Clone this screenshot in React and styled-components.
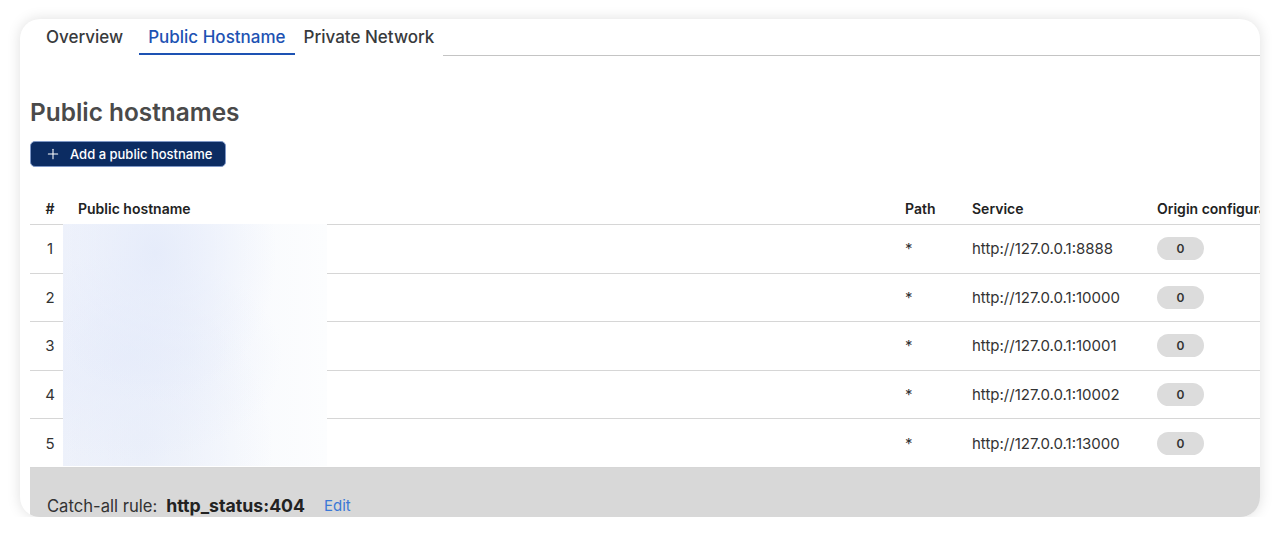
import React from 'react'
import { styled, createGlobalStyle } from 'styled-components'
import { Plus } from 'lucide-react'

const rows = [
  { id: 1, service: 'http://127.0.0.1:8888' },
  { id: 2, service: 'http://127.0.0.1:10000' },
  { id: 3, service: 'http://127.0.0.1:10001' },
  { id: 4, service: 'http://127.0.0.1:10002' },
  { id: 5, service: 'http://127.0.0.1:13000' },
]

function App() {
  return (
    <>
      <Global />
      <Card>
        <Tabs>
          <Tab>Overview</Tab>
          <Tab active>Public Hostname</Tab>
          <Tab>Private Network</Tab>
          <TabFill />
        </Tabs>

        <Heading>Public hostnames</Heading>
        <AddButton>
          <Plus size={16} strokeWidth={1.6} />
          Add a public hostname
        </AddButton>

        <Table>
          <HeadRow>
            <Cell center>#</Cell>
            <Cell>Public hostname</Cell>
            <Cell>Path</Cell>
            <Cell>Service</Cell>
            <Cell>Origin configurations</Cell>
          </HeadRow>
          {rows.map(r => (
            <Row key={r.id}>
              <Cell center>{r.id}</Cell>
              <Cell />
              <Cell>*</Cell>
              <Cell>{r.service}</Cell>
              <Cell>
                <Badge>0</Badge>
              </Cell>
            </Row>
          ))}
          <Redacted />
        </Table>

        <Footer>
          Catch-all rule:
          <Rule>http_status:404</Rule>
          <EditLink>Edit</EditLink>
        </Footer>
      </Card>
    </>
  )
}

export default App

const Global = createGlobalStyle`
  html, body {
    margin: 0;
    background: #ffffff;
    font-family: Inter, "Noto Sans", "Liberation Sans", sans-serif;
    color: #333;
  }
`

const Card = styled.div`
  margin: 19px 0 0 20px;
  width: 1240px;
  height: 498px;
  box-sizing: border-box;
  padding-left: 10px;
  background: #fff;
  border-radius: 20px;
  overflow: hidden;
  box-shadow: 0 0 14px rgba(0, 0, 0, 0.13);
`

const Tabs = styled.div`
  display: flex;
  height: 37px;
  padding-left: 7px;
`

const Tab = styled.div`
  display: flex;
  align-items: center;
  padding: 1px 9px 0;
  font-size: 17px;
  font-weight: 500;
  color: ${p => (p.active ? '#1d52b3' : '#383a3c')};
  border-bottom: 2px solid ${p => (p.active ? '#1d52b3' : 'transparent')};
  margin-bottom: 1px;

  &:first-child {
    margin-right: 7px;
  }
`

const TabFill = styled.div`
  flex: 1;
  border-bottom: 1px solid #c4c4c4;
`

const Heading = styled.h1`
  margin: 40px 0 0;
  font-size: 24.4px;
  line-height: 32px;
  font-weight: 600;
  color: #4a4a4a;
`

const AddButton = styled.button`
  margin-top: 13px;
  display: flex;
  align-items: center;
  gap: 9px;
  height: 26px;
  padding: 0 13px 0 14px;
  background: #0c2c62;
  color: #fff;
  border: 1px solid #7e97c6;
  border-radius: 5px;
  font-family: inherit;
  font-size: 13px;
  font-weight: 500;
`

const Table = styled.div`
  position: relative;
  margin-top: 25px;
  width: 1400px;
`

const HeadRow = styled.div`
  display: grid;
  grid-template-columns: 40px 827px 67px 185px 281px;
  height: 33px;
  box-sizing: border-box;
  border-bottom: 1px solid #d6d6d6;
  font-size: 14px;
  font-weight: 600;
  color: #222;
`

const Row = styled(HeadRow)`
  height: 48.6px;
  font-size: 15px;
  font-weight: 400;
  color: #333;
`

const Cell = styled.div`
  display: flex;
  align-items: center;
  justify-content: ${p => (p.center ? 'center' : 'flex-start')};
  padding-left: ${p => (p.center ? '0' : '8px')};
  white-space: nowrap;
`

const Badge = styled.span`
  display: inline-flex;
  align-items: center;
  justify-content: center;
  width: 47px;
  height: 23px;
  border-radius: 12px;
  background: #dcdcdc;
  font-size: 12px;
  font-weight: 600;
  color: #333;
`

const Redacted = styled.div`
  position: absolute;
  left: 33px;
  top: 32px;
  width: 264px;
  height: 242px;
  background:
    radial-gradient(ellipse at 35% 12%, rgba(226, 233, 250, 0.8), transparent 50%),
    radial-gradient(ellipse at 25% 55%, rgba(229, 235, 250, 0.7), transparent 55%),
    radial-gradient(ellipse at 30% 92%, rgba(230, 236, 249, 0.7), transparent 50%),
    linear-gradient(90deg, #f0f3fb, #f7f9fd 55%, #fcfdfe);
`

const Footer = styled.div`
  display: flex;
  align-items: center;
  height: 80px;
  box-sizing: border-box;
  padding: 27px 0 31px 17px;
  background: #d8d8d8;
  font-size: 16.6px;
  color: #333;
`

const Rule = styled.span`
  margin-left: 9px;
  font-size: 17.7px;
  font-weight: 700;
  color: #222;
`

const EditLink = styled.span`
  margin-left: 19px;
  font-size: 15px;
  color: #3b78d6;
`
